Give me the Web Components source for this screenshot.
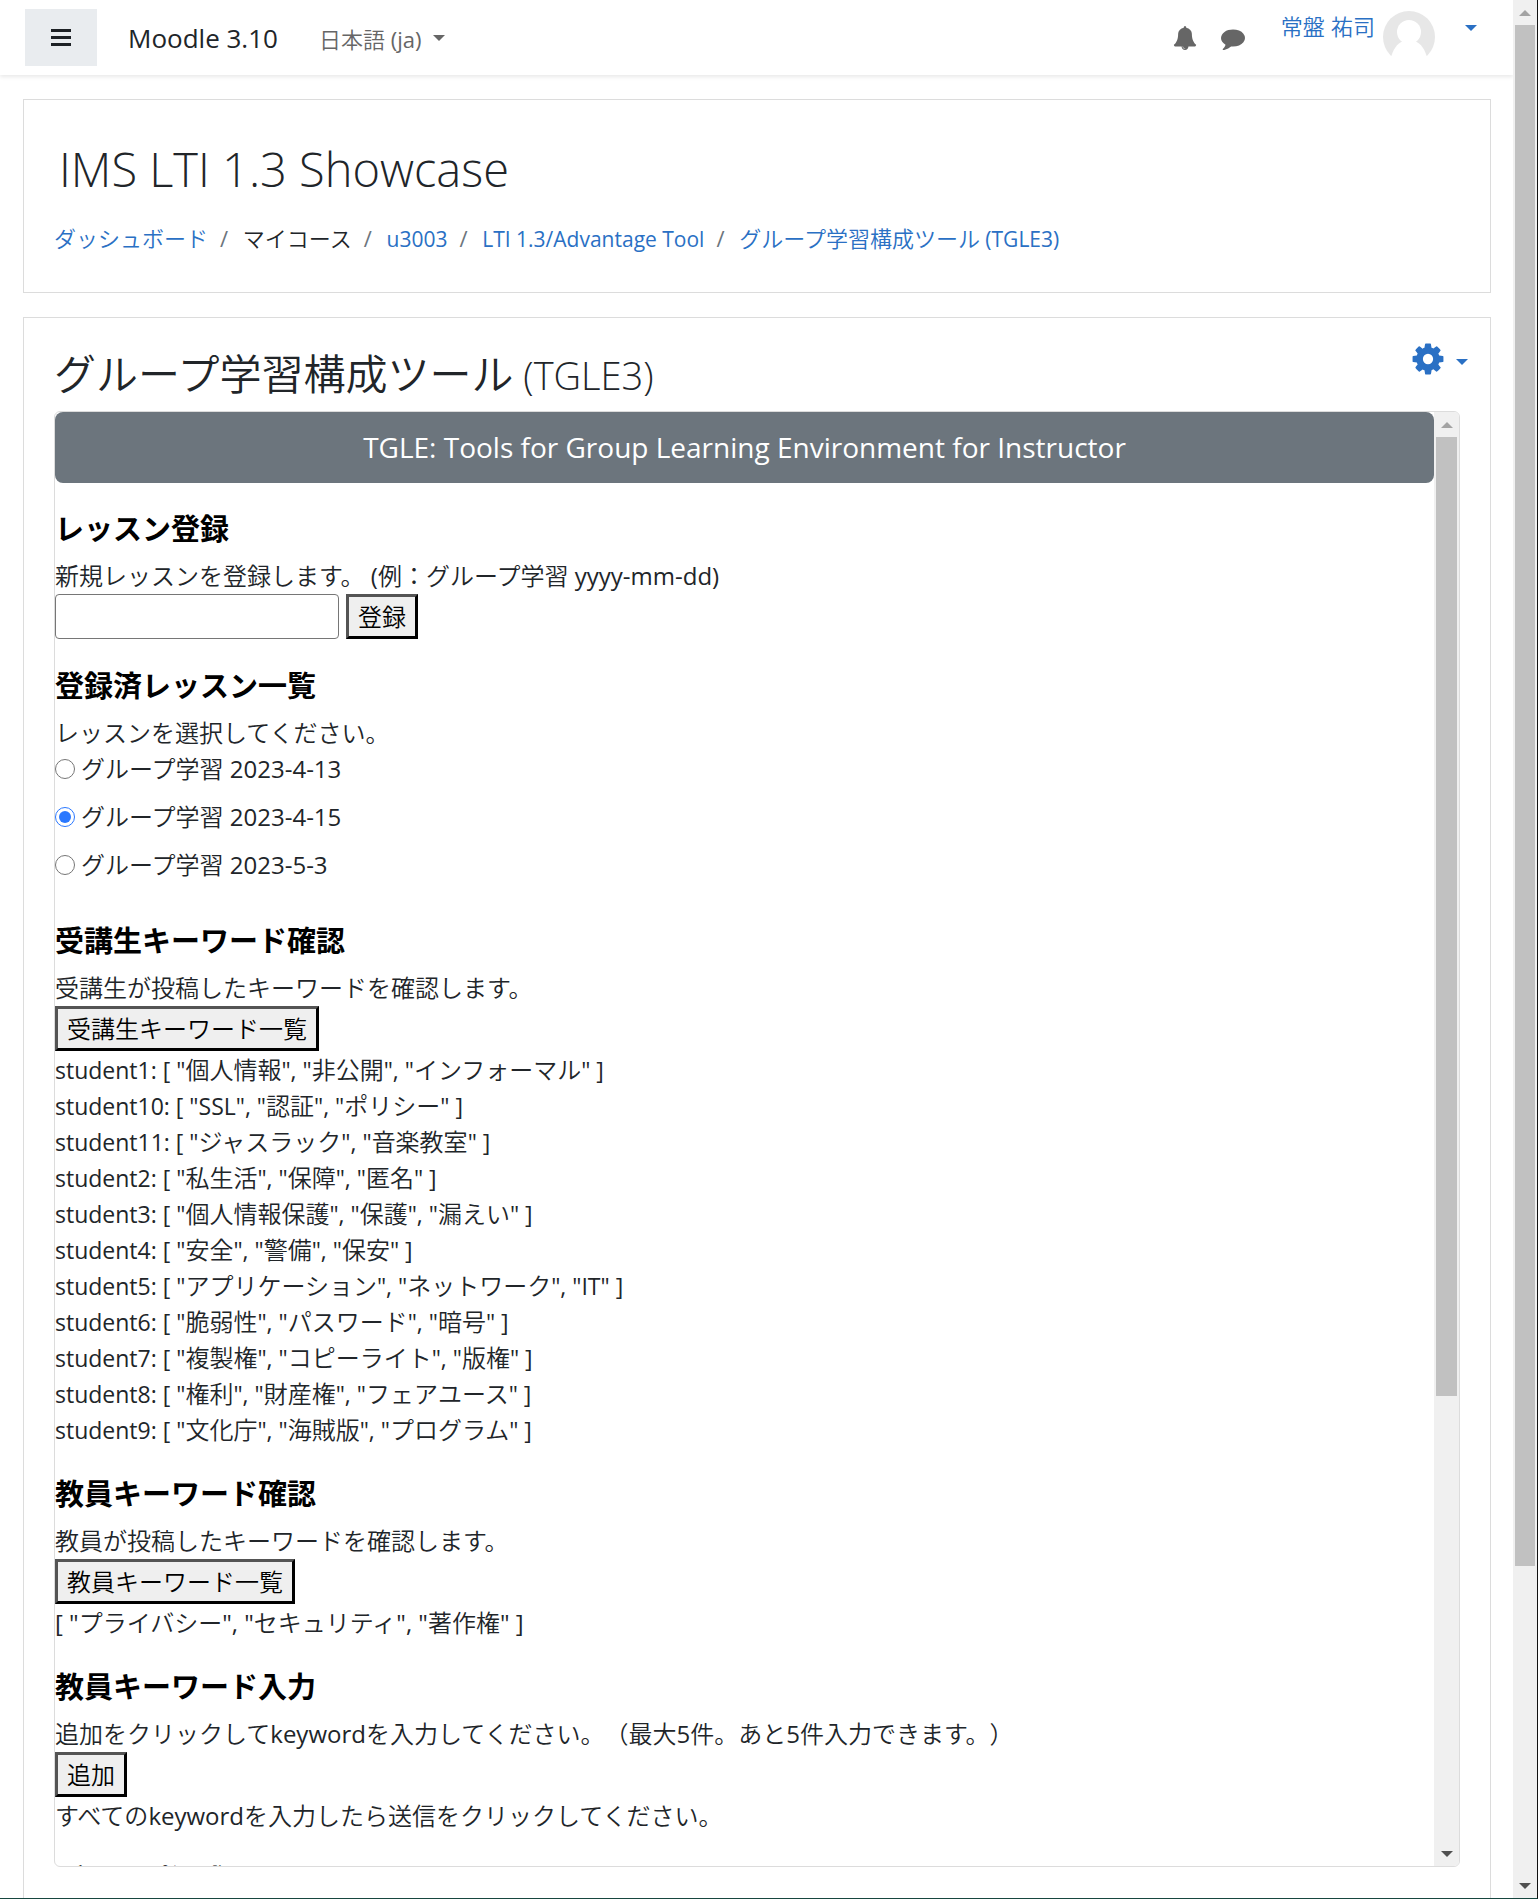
<!DOCTYPE html>
<html lang="ja">
<head>
<meta charset="utf-8">
<meta name="viewport" content="width=device-width, initial-scale=1">
<title>グループ学習構成ツール (TGLE3)</title>
<style>
  body {
    margin: 0;
    background: #fff;
    color: #212529;
    font-family: "Open Sans", "Noto Sans CJK JP", sans-serif;
    text-spacing-trim: space-all;
  }
</style>
</head>
<body>
<moodle-page></moodle-page>

<script>
const define = (name, html, setup) => {
  const template = document.createElement('template');
  template.innerHTML = html;
  customElements.define(name, class extends HTMLElement {
    connectedCallback() {
      if (this.shadowRoot) return;
      this.attachShadow({ mode: 'open' }).append(template.content.cloneNode(true));
      if (setup) setup(this, this.shadowRoot);
    }
  });
};

/* Mixed Japanese and Latin text: Latin runs get their own size and weight. */
define('mixed-text', `
  <style>
    :host { display: inline; font-weight: var(--cjk-weight, 350); }
    span { font-size: var(--latin-size, 24px); font-weight: var(--latin-weight, 400); }
  </style>`,
  (host, root) => {
    for (const run of host.textContent.match(/[\x20-\x7e]+|[^\x20-\x7e]+/g) || []) {
      if (/^[\x20-\x7e]/.test(run)) {
        const span = document.createElement('span');
        span.textContent = run;
        root.append(span);
      } else {
        root.append(run);
      }
    }
  });

define('caret-down', `
  <style>
    :host { display: block; border: 6px solid transparent; border-top-color: currentColor; border-bottom: 0; }
  </style>`);

define('scroll-rail', `
  <style>
    :host { display: flex; flex-direction: column; flex: none; width: 25px; background: #f0f0f0; }
    .cap { flex: none; height: 25px; display: flex; align-items: center; justify-content: center; }
    .cap i { border: 6px solid transparent; }
    .up i { border-bottom-color: #a3a3a3; border-top: 0; }
    .down i { border-top-color: #505050; border-bottom: 0; }
    .track { flex: 1; padding: 0 2px; }
    .thumb { height: var(--thumb, 50%); background: #c1c1c1; }
  </style>
  <div class="cap up"><i></i></div>
  <div class="track"><div class="thumb"></div></div>
  <div class="cap down"><i></i></div>`);

define('user-avatar', `
  <style>:host { display: block; } svg { display: block; }</style>
  <svg width="52" height="52" viewBox="0 0 52 52" aria-hidden="true">
    <defs><clipPath id="c"><path d="M0 0H52V45H0z"/></clipPath></defs>
    <g clip-path="url(#c)">
      <circle cx="26" cy="26" r="26" fill="#e7e7e7"/>
      <circle cx="26" cy="21" r="12" fill="#fff"/>
      <path fill="#fff" d="M8 46C11 36 16 31 21 30H31C36 31 41 36 44 46Z"/>
    </g>
  </svg>`);

define('site-header', `
  <style>
    :host {
      display: flex; align-items: center; height: 75px; box-sizing: border-box; padding: 0 36px 0 25px;
      background: #fff; box-shadow: 0 2px 4px rgba(0,0,0,.09);
    }
    .menu {
      width: 72px; height: 57px; padding: 0; border: 0; background: #e9ecef;
      display: flex; align-items: center; justify-content: center;
    }
    svg { display: block; }
    .brand { margin-left: 31px; font-size: 26px; color: #212529; text-decoration: none; }
    .lang {
      margin-left: 41px; display: flex; align-items: center; gap: 12px; padding: 0;
      border: 0; background: none; font: inherit; font-size: 22px; color: #666;
      --latin-size: 22px;
    }
    .right { margin-left: auto; display: flex; align-items: center; }
    .icon { display: block; padding: 0; border: 0; background: none; margin-right: 24px; }
    .user {
      display: flex; align-items: flex-start; height: 54px; margin-left: 12px;
      font-size: 22px; line-height: 30px; color: #2a70c4; text-decoration: none;
      --latin-size: 24px;
    }
    .user user-avatar { margin: 0 30px 0 8px; }
    .user caret-down { margin-top: 14px; }
  </style>
  <button class="menu" aria-label="メニュー">
    <svg width="20" height="18" viewBox="0 0 20 18" fill="#1d2125"><path d="M0 0h20v3H0zM0 7h20v3H0zM0 14h20v3H0z"/></svg>
  </button>
  <a class="brand" href="#">Moodle 3.10</a>
  <button class="lang"><mixed-text>日本語 (ja)</mixed-text><caret-down></caret-down></button>
  <div class="right">
    <button class="icon" aria-label="通知">
      <svg width="24" height="24" viewBox="0 0 1792 1792" fill="#666"><path d="M912 1696q0-16-16-16-59 0-101.500-42.500t-42.500-101.500q0-16-16-16t-16 16q0 73 51.500 124.500t124.500 51.500q16 0 16-16zm816-288q0 52-38 90t-90 38h-448q0 106-75 181t-181 75-181-75-75-181h-448q-52 0-90-38t-38-90q50-42 91-88t85-119.500 74.500-158.500 50-206 19.500-260q0-152 117-282.500t307-158.500q-8-19-8-39 0-40 28-68t68-28 68 28 28 68q0 20-8 39 190 28 307 158.500t117 282.500q0 139 19.500 260t50 206 74.500 158.500 85 119.500 91 88z"/></svg>
    </button>
    <button class="icon" aria-label="メッセージ">
      <svg width="24" height="24" viewBox="0 0 1792 1792" fill="#666"><path d="M1792 896q0 174-120 321.500t-326 233-450 85.500q-70 0-145-8-198 175-460 242-49 14-114 22-17 2-30.500-9t-17.500-29v-1q-3-4-.5-12t2-10 4.500-9.500l6-9 7-8.500 8-9q7-8 31-34.500t34.500-38 31-39.500 32.500-51 27-59 26-76q-157-89-247.500-220t-90.500-281q0-130 71-248.500t191-204.500 286-136.500 348-50.500q244 0 450 85.500t326 233 120 321.500z"/></svg>
    </button>
    <a class="user" href="#"><mixed-text>常盤 祐司</mixed-text><user-avatar></user-avatar><caret-down></caret-down></a>
  </div>`);

define('course-card', `
  <style>
    :host { display: block; border: 1px solid #dcdcdc; padding: 39px 30px 37px; }
    h1 { margin: 0; padding-left: 5px; font-size: 47px; line-height: 60px; font-weight: 300; }
    ol {
      display: flex; margin: 23px 0 0; padding: 0; list-style: none; line-height: 32px;
      font-size: 22px; --latin-size: 21px;
    }
    li + li::before { content: "/"; font-size: 22px; color: #6c757d; padding: 0 9px 0 12px; }
    a { color: #2a70c4; text-decoration: none; }
  </style>
  <h1>IMS LTI 1.3 Showcase</h1>
  <nav aria-label="breadcrumb">
    <ol>
      <li><a href="#"><mixed-text>ダッシュボード</mixed-text></a></li>
      <li><mixed-text>マイコース</mixed-text></li>
      <li><a href="#"><mixed-text>u3003</mixed-text></a></li>
      <li><a href="#"><mixed-text>LTI 1.3/Advantage Tool</mixed-text></a></li>
      <li><a href="#"><mixed-text>グループ学習構成ツール (TGLE3)</mixed-text></a></li>
    </ol>
  </nav>`);

define('tool-section', `
  <style>
    :host { display: flow-root; margin-top: 28px; }
    h3 { margin: 0 0 12px; font-size: 29px; line-height: 35px; font-weight: 700; color: #000; }
  </style>
  <h3></h3>
  <slot></slot>`,
  (host, root) => { root.querySelector('h3').textContent = host.getAttribute('heading'); });

define('keyword-list', `
  <style>
    :host { display: block; --latin-size: 23px; }
    ul { margin: 0; padding: 0; list-style: none; }
  </style>
  <ul></ul>`,
  (host, root) => {
    const rows = [
      ['student1', '個人情報', '非公開', 'インフォーマル'],
      ['student10', 'SSL', '認証', 'ポリシー'],
      ['student11', 'ジャスラック', '音楽教室'],
      ['student2', '私生活', '保障', '匿名'],
      ['student3', '個人情報保護', '保護', '漏えい'],
      ['student4', '安全', '警備', '保安'],
      ['student5', 'アプリケーション', 'ネットワーク', 'IT'],
      ['student6', '脆弱性', 'パスワード', '暗号'],
      ['student7', '複製権', 'コピーライト', '版権'],
      ['student8', '権利', '財産権', 'フェアユース'],
      ['student9', '文化庁', '海賊版', 'プログラム']
    ];
    root.querySelector('ul').innerHTML = rows.map(([name, ...words]) =>
      `<li><mixed-text>${name}: [ ${words.map(w => `"${w}"`).join(', ')} ]</mixed-text></li>`).join('');
  });

define('tgle-tool', `
  <style>
    :host { display: flex; min-height: 0; box-sizing: border-box; border: 1px solid #dcdcdc; border-radius: 6px; overflow: hidden; }
    main { flex: 1; min-width: 0; overflow: hidden; font-size: 24px; line-height: 36px; }
    h2 {
      margin: 0; padding: 13px 0; border-radius: 8px; background: #6c757d; color: #fff;
      text-align: center; font-size: 28px; line-height: 45px; font-weight: 400;
    }
    p { margin: 0; }
    label.line { display: block; }
    .row { display: flex; gap: 7px; margin-bottom: 1px; }
    input[type=text] {
      width: 284px; height: 45px; box-sizing: border-box; margin: 0; padding: 1px 3px;
      border: 1px solid #767676; border-radius: 4px; font: inherit; background: #fff;
    }
    button {
      padding: 2px 9px 1px; border: 3px outset #000; border-radius: 0; background: #efefef;
      color: #000; font: inherit;
    }
    .choice { display: flex; align-items: center; gap: 6px; margin-bottom: 12px; }
    .choice input { width: 20px; height: 20px; margin: 0; accent-color: #2a78ff; }
    scroll-rail { --thumb: 68.3%; }
  </style>
  <main>
    <h2>TGLE: Tools for Group Learning Environment for Instructor</h2>
    <tool-section heading="レッスン登録">
      <label class="line" for="lesson"><mixed-text>新規レッスンを登録します。 (例：グループ学習 yyyy-mm-dd)</mixed-text></label>
      <div class="row"><input type="text" id="lesson"><button><mixed-text>登録</mixed-text></button></div>
    </tool-section>
    <tool-section heading="登録済レッスン一覧">
      <p><mixed-text>レッスンを選択してください。</mixed-text></p>
      <label class="choice"><input type="radio" name="l"><mixed-text>グループ学習 2023-4-13</mixed-text></label>
      <label class="choice"><input type="radio" name="l" checked><mixed-text>グループ学習 2023-4-15</mixed-text></label>
      <label class="choice"><input type="radio" name="l"><mixed-text>グループ学習 2023-5-3</mixed-text></label>
    </tool-section>
    <tool-section heading="受講生キーワード確認">
      <p><mixed-text>受講生が投稿したキーワードを確認します。</mixed-text></p>
      <div class="row"><button><mixed-text>受講生キーワード一覧</mixed-text></button></div>
      <keyword-list></keyword-list>
    </tool-section>
    <tool-section heading="教員キーワード確認">
      <p><mixed-text>教員が投稿したキーワードを確認します。</mixed-text></p>
      <div class="row"><button><mixed-text>教員キーワード一覧</mixed-text></button></div>
      <p><mixed-text>[ "プライバシー", "セキュリティ", "著作権" ]</mixed-text></p>
    </tool-section>
    <tool-section heading="教員キーワード入力">
      <p><mixed-text>追加をクリックしてkeywordを入力してください。（最大5件。あと5件入力できます。）</mixed-text></p>
      <div class="row"><button><mixed-text>追加</mixed-text></button></div>
      <p><mixed-text>すべてのkeywordを入力したら送信をクリックしてください。</mixed-text></p>
    </tool-section>
    <tool-section heading="グループ編成"></tool-section>
  </main>
  <scroll-rail aria-hidden="true"></scroll-rail>`);

define('activity-card', `
  <style>
    :host { display: flex; flex-direction: column; min-height: 0; border: 1px solid #dcdcdc; border-bottom: 0; padding: 23px 30px 31px; }
    header { display: flex; justify-content: space-between; align-items: flex-start; height: 70px; margin-right: -8px; }
    h2 {
      margin: 0; font-size: 42px; line-height: 66px; font-weight: 400; white-space: nowrap;
      --cjk-weight: 350; --latin-size: 38px; --latin-weight: 300;
    }
    button { display: flex; align-items: center; gap: 10px; padding: 0; border: 0; background: none; color: #2a70c4; }
    button caret-down { margin-top: 6px; }
    svg { display: block; }
    tgle-tool { flex: 1; }
  </style>
  <header>
    <h2><mixed-text>グループ学習構成ツール (TGLE3)</mixed-text></h2>
    <button aria-label="操作メニュー">
      <svg width="36" height="36" viewBox="0 0 1792 1792" fill="currentColor"><path d="M1152 896q0-106-75-181t-181-75-181 75-75 181 75 181 181 75 181-75 75-181zm512-109v222q0 12-8 23t-20 13l-185 28q-19 54-39 91 35 50 107 138 10 12 10 25t-9 23q-27 37-99 108t-94 71q-12 0-26-9l-138-108q-44 23-91 38-16 136-29 186-7 28-36 28h-222q-14 0-24.500-8.500t-11.500-21.500l-28-184q-49-16-90-37l-141 107q-10 9-25 9-14 0-25-11-126-114-165-168-7-10-7-23 0-12 8-23 15-21 51-66.500t54-70.500q-27-50-41-99l-183-27q-13-2-21-12.500t-8-23.500v-222q0-12 8-23t19-13l186-28q14-46 39-92-40-57-107-138-10-12-10-24 0-10 9-23 26-36 98.500-107.500t94.500-71.500q13 0 26 10l138 107q44-23 91-38 16-136 29-186 7-28 36-28h222q14 0 24.500 8.500t11.500 21.500l28 184q49 16 90 37l142-107q9-9 24-9 13 0 25 10 129 119 165 170 7 8 7 22 0 12-8 23-15 21-51 66.500t-54 70.500q26 50 41 98l183 28q13 2 21 12.500t8 23.500z"/></svg>
      <caret-down></caret-down>
    </button>
  </header>
  <tgle-tool></tgle-tool>`);

define('moodle-page', `
  <style>
    :host {
      display: flex; height: 100vh; box-sizing: border-box; overflow: hidden;
      border-right: 1px solid #111; border-bottom: 1px solid #17463f;
    }
    .page { flex: 1; min-width: 0; display: flex; flex-direction: column; }
    .content { flex: 1; min-height: 0; display: flex; flex-direction: column; gap: 24px; padding: 24px 22px 0 23px; }
    activity-card { flex: 1; }
    scroll-rail { --thumb: 83.4%; width: 24px; }
  </style>
  <div class="page">
    <site-header></site-header>
    <div class="content">
      <course-card></course-card>
      <activity-card></activity-card>
    </div>
  </div>
  <scroll-rail aria-hidden="true"></scroll-rail>`);
</script>
</body>
</html>
